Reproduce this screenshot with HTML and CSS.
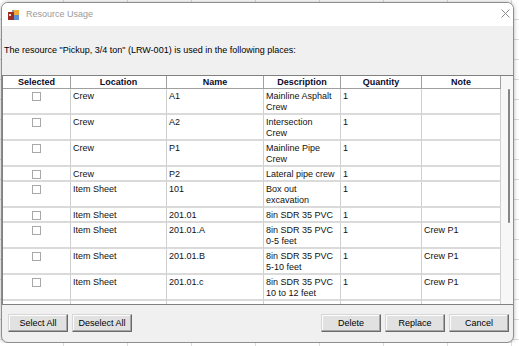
FILE: index.html
```html
<!DOCTYPE html>
<html lang="en">
<head>
  <meta charset="UTF-8">
  <title>Resource Usage</title>
  <link rel="stylesheet" href="styles.css">
</head>
<body>
  <div class="window">
    <div class="titlebar">
      <svg class="app-icon" width="11" height="10" viewBox="0 0 11 10">
        <rect x="4" y="0" width="7" height="6" fill="#8a9bb0"/>
        <rect x="6" y="0" width="5" height="5" fill="#f2a93b"/>
        <rect x="6" y="5" width="5" height="5" fill="#5b8fd6"/>
        <rect x="0" y="2" width="6" height="8" fill="#9c2f25"/>
        <rect x="1" y="4" width="2" height="2" fill="#f4d9c6"/>
      </svg>
      <span class="title">Resource Usage</span>
      <svg class="close" width="9" height="9" viewBox="0 0 9 9">
        <path d="M0.5 0.5 L8.5 8.5 M8.5 0.5 L0.5 8.5" stroke="#8c8c8c" stroke-width="1" fill="none"/>
      </svg>
    </div>

    <div class="content">
      <p class="message">The resource "Pickup, 3/4 ton" (LRW-001) is used in the following places:</p>

      <div class="grid">
        <div class="grid-main">
          <table class="places">
            <colgroup>
              <col class="c-sel"><col class="c-loc"><col class="c-name"><col class="c-desc"><col class="c-qty"><col class="c-note">
            </colgroup>
            <thead>
              <tr><th>Selected</th><th>Location</th><th>Name</th><th>Description</th><th>Quantity</th><th>Note</th></tr>
            </thead>
            <tbody>
              <tr><td><span class="check"></span></td><td>Crew</td><td>A1</td><td>Mainline Asphalt<br>Crew</td><td>1</td><td></td></tr>
              <tr><td><span class="check"></span></td><td>Crew</td><td>A2</td><td>Intersection<br>Crew</td><td>1</td><td></td></tr>
              <tr><td><span class="check"></span></td><td>Crew</td><td>P1</td><td>Mainline Pipe<br>Crew</td><td>1</td><td></td></tr>
              <tr><td><span class="check"></span></td><td>Crew</td><td>P2</td><td>Lateral pipe crew</td><td>1</td><td></td></tr>
              <tr><td><span class="check"></span></td><td>Item Sheet</td><td>101</td><td>Box out<br>excavation</td><td>1</td><td></td></tr>
              <tr><td><span class="check"></span></td><td>Item Sheet</td><td>201.01</td><td>8in SDR 35 PVC</td><td>1</td><td></td></tr>
              <tr><td><span class="check"></span></td><td>Item Sheet</td><td>201.01.A</td><td>8in SDR 35 PVC<br>0-5 feet</td><td>1</td><td>Crew P1</td></tr>
              <tr><td><span class="check"></span></td><td>Item Sheet</td><td>201.01.B</td><td>8in SDR 35 PVC<br>5-10 feet</td><td>1</td><td>Crew P1</td></tr>
              <tr><td><span class="check"></span></td><td>Item Sheet</td><td>201.01.c</td><td>8in SDR 35 PVC<br>10 to 12 feet</td><td>1</td><td>Crew P1</td></tr>
              <tr><td><span class="check"></span></td><td>Item Sheet</td><td>201.05</td><td>Subbase<br>material</td><td>1</td><td></td></tr>
            </tbody>
          </table>
        </div>
        <div class="scrollbar">
          <div class="thumb"></div>
        </div>
      </div>

      <div class="buttons">
        <div class="group">
          <button>Select All</button>
          <button>Deselect All</button>
        </div>
        <div class="group">
          <button>Delete</button>
          <button>Replace</button>
          <button>Cancel</button>
        </div>
      </div>
    </div>
  </div>
</body>
</html>
```

FILE: styles.css
```css
body {
  margin: 0;
  font-family: "Liberation Sans", Arial, sans-serif;
  font-size: 9px;
  color: #000;
  background-color: #fff;
  background-image:
    repeating-linear-gradient(to bottom, transparent 0 19px, #dcdcdc 19px 20px),
    repeating-linear-gradient(to right, transparent 0 63px, #dcdcdc 63px 64px);
}
.window {
  margin: 2px 0 0 1px;
  width: 513px;
  height: 341px;
  box-sizing: border-box;
  border: 1px solid #8e8e8e;
  border-radius: 7px;
  overflow: hidden;
  background: #f0f0f0;
  box-shadow: 0 0 4px rgba(0, 0, 0, 0.3);
  display: flex;
  flex-direction: column;
}
.titlebar {
  height: 23px;
  flex: none;
  background: #fff;
  display: flex;
  align-items: center;
  padding: 0 3px 0 6px;
}
.app-icon {
  display: block;
  margin-right: 7px;
}
.title {
  flex: 1;
  color: #9a9a9a;
  font-size: 9px;
  margin-top: -2px;
}
.close {
  display: block;
  margin-top: -2px;
}
.content {
  flex: 1;
  display: flex;
  flex-direction: column;
}
.message {
  margin: 19px 0 0 2px;
  line-height: 11px;
  white-space: nowrap;
}
.grid {
  margin-top: 19px;
  height: 230px;
  box-sizing: border-box;
  border-top: 1px solid #808080;
  border-bottom: 1px solid #808080;
  border-left: 1px solid #808080;
  display: flex;
}
.grid-main {
  width: 498px;
  overflow: hidden;
  background: #fff;
}
.places {
  width: 498px;
  table-layout: fixed;
  border-collapse: separate;
  border-spacing: 0;
}
.c-sel { width: 68px; }
.c-loc { width: 96px; }
.c-name { width: 97px; }
.c-desc { width: 77px; }
.c-qty { width: 81px; }
.c-note { width: 79px; }
.places th {
  height: 12px;
  padding: 0;
  line-height: 12px;
  font-weight: bold;
  color: #0b0b2b;
  text-align: center;
  background: #fff;
  border-right: 1px solid #a0a0a0;
  border-bottom: 1px solid #a0a0a0;
}
.places td {
  padding: 2px 2px 0 2px;
  line-height: 11px;
  vertical-align: top;
  white-space: nowrap;
  overflow: hidden;
  border-right: 1px solid #d0d0d0;
  border-bottom: 2px solid #dadada;
  color: #111;
}
.check {
  display: block;
  width: 9px;
  height: 9px;
  box-sizing: border-box;
  margin: 1px auto 0;
  border: 1px solid #a8a8a8;
  background: #fff;
}
.scrollbar {
  flex: 1;
  background: #f7f7f7;
  padding: 13px 0 0 7px;
}
.thumb {
  width: 2px;
  height: 134px;
  background: #858585;
  border-radius: 1px;
}
.buttons {
  margin-top: 9px;
  padding: 0 4px 0 6px;
  display: flex;
  justify-content: space-between;
}
.group {
  display: flex;
  gap: 4px;
}
.buttons button {
  width: 60px;
  height: 18px;
  padding: 0;
  font-family: "Liberation Sans", Arial, sans-serif;
  font-size: 9px;
  color: #000;
  background: #e1e1e1;
  border: 1px solid;
  border-color: #d6d6d6 #6a6a6a #6a6a6a #d6d6d6;
  box-shadow: inset -1px -1px #a6a6a6, inset 1px 1px #fdfdfd;
}
```
